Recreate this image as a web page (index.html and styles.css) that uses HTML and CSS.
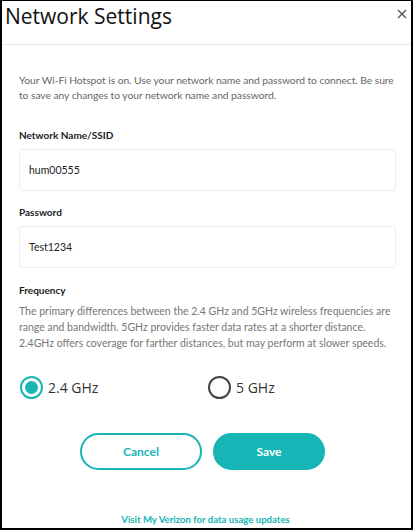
FILE: index.html
```html
<!DOCTYPE html>
<html>
<head>
<meta charset="utf-8">
<link rel="stylesheet" href="styles.css">
</head>
<body>
<div class="dialog">
  <header class="dialog-header">
    <h1 class="title">Network Settings</h1>
    <svg class="close" width="10" height="10" viewBox="0 0 10 10"><path d="M1 1 L9 9 M9 1 L1 9" stroke="#555" stroke-width="1.4" fill="none"/></svg>
  </header>
  <div class="dialog-body">
    <p class="intro">Your Wi-Fi Hotspot is on. Use your network name and password to connect. Be sure to save any changes to your network name and password.</p>

    <label class="field-label label-ssid">Network Name/SSID</label>
    <div class="input">hum00555</div>

    <label class="field-label label-pass">Password</label>
    <div class="input">Test1234</div>

    <label class="field-label label-freq">Frequency</label>
    <p class="freq-text">The primary differences between the 2.4 GHz and 5GHz wireless frequencies are range and bandwidth. 5GHz provides faster data rates at a shorter distance. 2.4GHz offers coverage for farther distances, but may perform at slower speeds.</p>

    <div class="radios">
      <div class="radio-item">
        <span class="radio checked"></span>
        <span class="radio-label">2.4 GHz</span>
      </div>
      <div class="radio-item">
        <span class="radio"></span>
        <span class="radio-label">5 GHz</span>
      </div>
    </div>

    <div class="buttons">
      <button class="btn btn-cancel">Cancel</button>
      <button class="btn btn-save">Save</button>
    </div>

    <a class="link">Visit My Verizon for data usage updates</a>
  </div>
</div>
</body>
</html>
```

FILE: styles.css
```css
* { box-sizing: border-box; }
html, body { margin: 0; padding: 0; background: #fff; }
.dialog {
  width: 413px;
  height: 530px;
  border: 2px solid #000;
  border-top-width: 1px;
  background: #fff;
  display: flex;
  flex-direction: column;
  font-family: Lato, "Noto Sans", sans-serif;
  overflow: hidden;
}
.dialog-header {
  height: 44px;
  border-bottom: 1px solid #e8e8e8;
  display: flex;
  align-items: flex-start;
  justify-content: space-between;
  padding: 0 4px 0 3px;
}
.title {
  margin: 0;
  font-family: "Open Sans", "Noto Sans", sans-serif;
  font-weight: 400;
  font-size: 21px;
  line-height: 31px;
  color: #111;
}
.close { margin-top: 8px; }
.dialog-body {
  padding: 0 15px 0 17px;
  display: flex;
  flex-direction: column;
}
.intro {
  margin: 28px 0 0;
  font-size: 10.3px;
  letter-spacing: -0.05px;
  line-height: 15px;
  color: #666;
}
.field-label {
  display: block;
  font-size: 10px;
  font-weight: 700;
  line-height: 16px;
  color: #222;
}
.label-ssid { margin-top: 24px; }
.label-pass { margin-top: 13px; }
.label-freq { margin-top: 14px; }
.input {
  margin-top: 6px;
  height: 42px;
  border: 1px solid #ececec;
  border-radius: 3px;
  padding: 0 9px;
  display: flex;
  align-items: center;
  font-size: 10.5px;
  color: #222;
}
.freq-text {
  margin: 5px 0 0;
  font-size: 10.5px;
  line-height: 16px;
  color: #777;
}
.radios {
  margin-top: 25px;
  display: flex;
  padding-left: 1px;
}
.radio-item {
  display: flex;
  align-items: center;
  gap: 5px;
  width: 189px;
}
.radio {
  width: 23px;
  height: 23px;
  border-radius: 50%;
  border: 2px solid #444;
  position: relative;
}
.radio.checked { border-color: #17b5b5; }
.radio.checked::after {
  content: "";
  position: absolute;
  left: 3px; top: 3px;
  width: 13px; height: 13px;
  border-radius: 50%;
  background: #17b5b5;
}
.radio-label {
  font-family: "Open Sans", "Noto Sans", sans-serif;
  font-size: 14px;
  color: #333;
}
.buttons {
  margin-top: 34px;
  display: flex;
  justify-content: center;
  gap: 11px;
  padding-right: 10px;
}
.btn {
  height: 37px;
  border-radius: 19px;
  font-family: Lato, sans-serif;
  font-weight: 700;
  font-size: 12px;
  border: 2px solid #17b5b5;
}
.btn-cancel { width: 122px; background: #fff; color: #17b5b5; }
.btn-save { width: 112px; background: #17b5b5; color: #fff; }
.link {
  margin-top: 44px;
  align-self: center;
  font-size: 9.6px;
  font-weight: 700;
  color: #17b5b5;
  padding-right: 4px;
}
```
